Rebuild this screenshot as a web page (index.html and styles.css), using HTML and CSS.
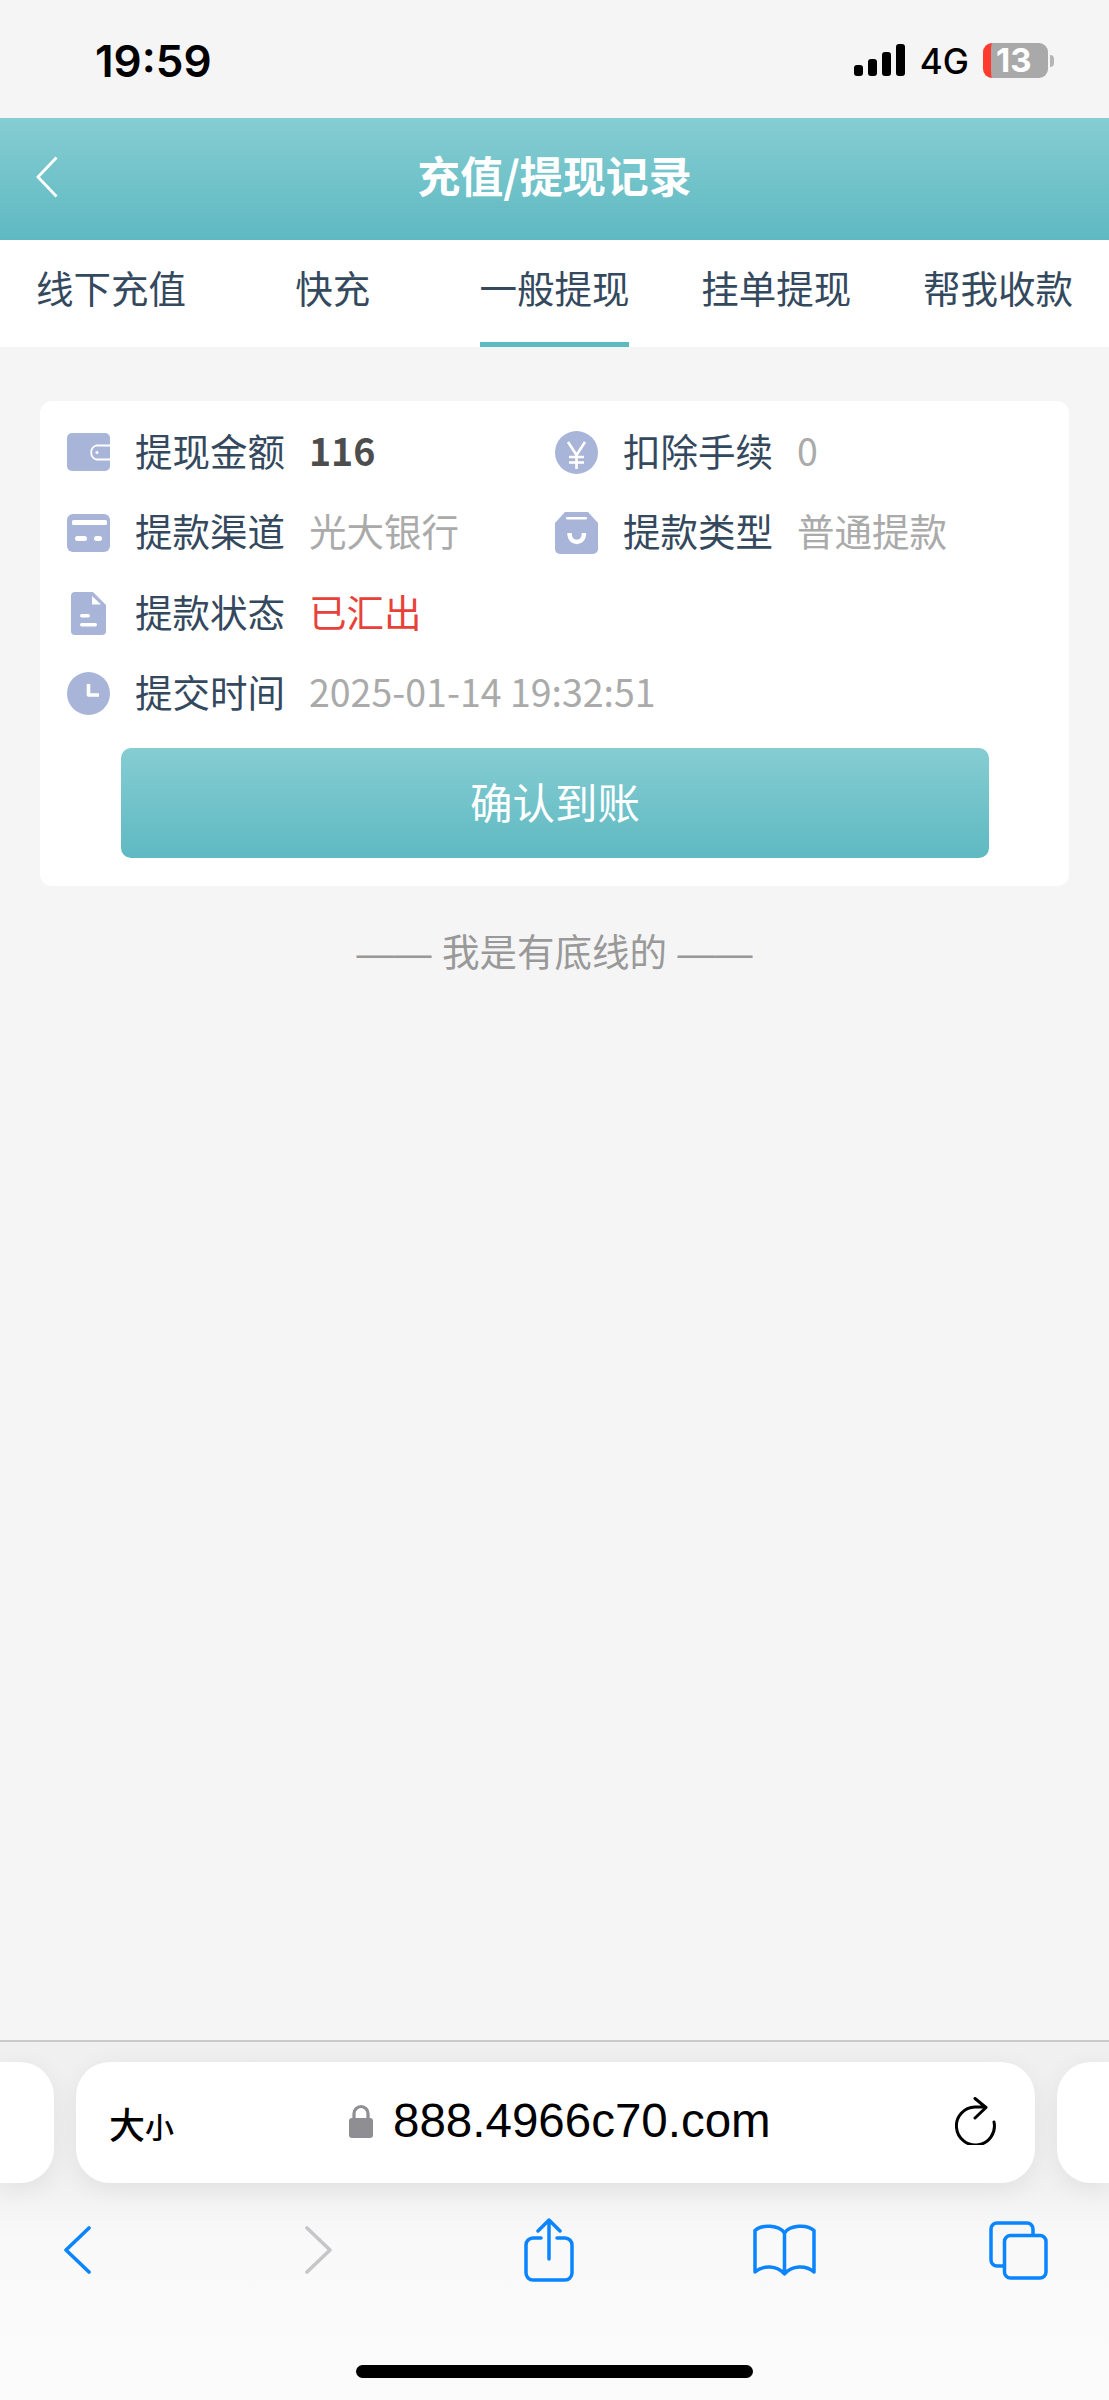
FILE: index.html
```html
<!DOCTYPE html>
<html lang="zh-CN">
<head>
    <meta charset="utf-8">
    <title>充值/提现记录</title>
    <link rel="stylesheet" href="styles.css">
</head>
<body>
    <div class="phone">
        <div class="statusbar">
            <span class="clock">19:59</span>
            <div class="status-right">
                <div class="signal"><i class="b1"></i><i class="b2"></i><i class="b3"></i><i class="b4"></i></div>
                <span class="net">4G</span>
                <div class="battery"><div class="battery-body"><span>13</span></div><i class="battery-nub"></i></div>
            </div>
        </div>

        <div class="header">
            <svg class="back" width="22" height="42" viewBox="0 0 22 42"><path d="M20.5 1.5 L2 21 L20.5 40.5" fill="none" stroke="#fff" stroke-width="2.8"/></svg>
            <h1>充值/提现记录</h1>
        </div>

        <div class="tabs">
            <a>线下充值</a>
            <a>快充</a>
            <a class="active">一般提现</a>
            <a>挂单提现</a>
            <a>帮我收款</a>
        </div>

        <div class="main">
            <div class="card">
                <div class="info">
                    <div class="item">
                        <span class="ico">
                            <svg width="43" height="38" viewBox="0 0 43 38">
                                <rect width="43" height="38" rx="5" fill="#a8b5d9"/>
                                <path d="M43 12.5 H29 a7.5 7.5 0 0 0 0 14 H43" fill="none" stroke="#fff" stroke-width="1.8"/>
                                <circle cx="30" cy="19.5" r="1.5" fill="#fff"/>
                            </svg>
                        </span>
                        <span class="label">提现金额</span>
                        <span class="value amount">116</span>
                    </div>
                    <div class="item">
                        <span class="ico">
                            <svg width="43" height="43" viewBox="0 0 43 43">
                                <circle cx="21.5" cy="21.5" r="21.5" fill="#a8b5d9"/>
                                <path d="M13 11 L21.5 24 L30 11 M21.5 24 V38 M14 26 H29 M14 31.5 H29" fill="none" stroke="#fff" stroke-width="2.6"/>
                            </svg>
                        </span>
                        <span class="label">扣除手续</span>
                        <span class="value">0</span>
                    </div>
                    <div class="item">
                        <span class="ico">
                            <svg width="43" height="38" viewBox="0 0 43 38">
                                <rect width="43" height="38" rx="6" fill="#a8b5d9"/>
                                <rect x="5" y="6" width="35" height="5" rx="1.5" fill="#fff"/>
                                <rect x="8" y="22" width="12" height="5" rx="2.5" fill="#fff"/>
                                <rect x="27" y="22" width="8" height="5" rx="2.5" fill="#fff"/>
                            </svg>
                        </span>
                        <span class="label">提款渠道</span>
                        <span class="value">光大银行</span>
                    </div>
                    <div class="item">
                        <span class="ico">
                            <svg width="43" height="42" viewBox="0 0 43 42">
                                <path d="M10 0 H33 L43 11 V37 a5 5 0 0 1 -5 5 H5 a5 5 0 0 1 -5 -5 V11 Z" fill="#a8b5d9"/>
                                <rect x="11" y="5" width="21" height="2.5" rx="1" fill="#fff"/>
                                <path d="M14.5 21 C14.5 33 29 33 29 21" fill="none" stroke="#fff" stroke-width="4.5"/>
                            </svg>
                        </span>
                        <span class="label">提款类型</span>
                        <span class="value">普通提款</span>
                    </div>
                    <div class="item wide">
                        <span class="ico">
                            <svg width="35" height="43" viewBox="0 0 35 43">
                                <path d="M4 0 H22 L35 13 V39 a4 4 0 0 1 -4 4 H4 a4 4 0 0 1 -4 -4 V4 a4 4 0 0 1 4 -4 Z" fill="#a8b5d9"/>
                                <path d="M21 4 L30 12.5 H21 Z" fill="#fff"/>
                                <rect x="9" y="22" width="10" height="3.5" rx="1.7" fill="#fff"/>
                                <rect x="9" y="31" width="17" height="3.5" rx="1.7" fill="#fff"/>
                            </svg>
                        </span>
                        <span class="label">提款状态</span>
                        <span class="value red">已汇出</span>
                    </div>
                    <div class="item wide">
                        <span class="ico">
                            <svg width="43" height="43" viewBox="0 0 43 43">
                                <circle cx="21.5" cy="21.5" r="21.5" fill="#a8b5d9"/>
                                <path d="M21.5 12 V23 H32" fill="none" stroke="#fff" stroke-width="3.6" stroke-linejoin="round"/>
                            </svg>
                        </span>
                        <span class="label">提交时间</span>
                        <span class="value">2025-01-14 19:32:51</span>
                    </div>
                </div>
                <button class="confirm">确认到账</button>
            </div>
            <div class="bottom-line">—— 我是有底线的 ——</div>
        </div>

        <div class="toolbar">
            <div class="pills">
                <div class="pill side-left"></div>
                <div class="pill url">
                    <span class="textsize"><b>大</b><small>小</small></span>
                    <span class="address">
                        <svg width="24" height="34" viewBox="0 0 24 34">
                            <path d="M5 16 V9.5 a7 7 0 0 1 14 0 V16" fill="none" stroke="#8e8e93" stroke-width="3.2"/>
                            <rect y="14" width="24" height="20" rx="3" fill="#8e8e93"/>
                        </svg>
                        <span>888.4966c70.com</span>
                    </span>
                    <svg class="reload" width="42" height="48" viewBox="0 0 42 48">
                        <path d="M39 25 A19 19 0 1 1 20 10 H30 M20 1.5 L31 10.5 L20 21" fill="none" stroke="#000" stroke-width="3" stroke-linecap="round" stroke-linejoin="round"/>
                    </svg>
                </div>
                <div class="pill side-right"></div>
            </div>

            <div class="nav-icons">
                <svg class="n-back" width="28" height="48" viewBox="0 0 28 48"><path d="M26 2 L3 24 L26 46" fill="none" stroke="#0a84ff" stroke-width="3.6" stroke-linecap="round" stroke-linejoin="round"/></svg>
                <svg class="n-forward" width="28" height="48" viewBox="0 0 28 48"><path d="M2 2 L25 24 L2 46" fill="none" stroke="#c6c6c8" stroke-width="3.6" stroke-linecap="round" stroke-linejoin="round"/></svg>
                <svg class="n-share" width="50" height="64" viewBox="0 0 50 64">
                    <path d="M17 20 H9 a7 7 0 0 0 -7 7 V55 a7 7 0 0 0 7 7 H41 a7 7 0 0 0 7 -7 V27 a7 7 0 0 0 -7 -7 H33 M25 41 V2.5 M14 13 L25 2 L36 13" fill="none" stroke="#0a84ff" stroke-width="3.5" stroke-linecap="round" stroke-linejoin="round"/>
                </svg>
                <svg class="n-book" width="63" height="52" viewBox="0 0 63 52">
                    <path d="M31.5 9 C26 1 9 0 2 6.5 V48 C10 41 24 41 31.5 50 C39 41 53 41 61 48 V6.5 C54 0 37 1 31.5 9 Z M31.5 9 V50" fill="none" stroke="#0a84ff" stroke-width="3.5" stroke-linejoin="round"/>
                </svg>
                <svg class="n-tabs" width="59" height="59" viewBox="0 0 59 59">
                    <path d="M14 45 H8 a6 6 0 0 1 -6 -6 V8 a6 6 0 0 1 6 -6 H38 a6 6 0 0 1 6 6 V14" fill="none" stroke="#0a84ff" stroke-width="3.5"/>
                    <rect x="15.5" y="14.5" width="41.5" height="42.5" rx="6" fill="none" stroke="#0a84ff" stroke-width="3.5"/>
                </svg>
            </div>

            <div class="home-indicator"></div>
        </div>
    </div>
</body>
</html>
```

FILE: styles.css
```css
* {
    box-sizing: border-box;
}
body {
    margin: 0;
    background-color: #f5f5f5;
    font-family: "Noto Sans CJK SC", "Noto Sans", sans-serif;
}
.phone {
    width: 1109px;
    height: 2400px;
    display: flex;
    flex-direction: column;
    overflow: hidden;
}

/* status bar */
.statusbar {
    height: 118px;
    flex: none;
    display: flex;
    justify-content: space-between;
    padding: 43px 55px 0 95px;
    color: #000;
    font-family: Inter, sans-serif;
}
.clock {
    font-size: 44px;
    font-weight: 600;
    line-height: 36px;
}
.status-right {
    display: flex;
    align-items: flex-start;
}
.signal {
    display: flex;
    align-items: flex-end;
    gap: 5px;
    height: 32px;
    margin-top: 1px;
}
.signal i {
    width: 9px;
    border-radius: 3px;
    background-color: #000;
}
.signal .b1 { height: 11px; }
.signal .b2 { height: 17px; }
.signal .b3 { height: 24px; }
.signal .b4 { height: 32px; }
.net {
    font-size: 35px;
    font-weight: 500;
    line-height: 36px;
    margin-left: 15px;
}
.battery {
    display: flex;
    align-items: center;
    margin-left: 14px;
    height: 35px;
}
.battery-body {
    width: 65px;
    height: 35px;
    border-radius: 9px;
    border-left: 8px solid #ff3b30;
    background-color: #a9a9a9;
    color: #fff;
    font-size: 33px;
    font-weight: 700;
    line-height: 35px;
    padding-left: 5px;
}
.battery-nub {
    width: 4px;
    height: 12px;
    margin-left: 2px;
    border-radius: 0 4px 4px 0;
    background-color: #b5b5b5;
}

/* header */
.header {
    height: 122px;
    flex: none;
    position: relative;
    display: flex;
    align-items: center;
    justify-content: center;
    background: linear-gradient(#85cdd2, #5fb9c2);
}
.header h1 {
    margin: 0 0 11px;
    color: #fff;
    font-size: 43px;
    font-weight: 700;
}
.back {
    position: absolute;
    left: 36px;
    top: 38px;
}

/* tabs */
.tabs {
    height: 107px;
    flex: none;
    display: grid;
    grid-template-columns: repeat(5, 1fr);
    background-color: #fff;
}
.tabs a {
    position: relative;
    display: flex;
    align-items: center;
    justify-content: center;
    padding-bottom: 14px;
    color: #34495e;
    font-size: 37.5px;
}
.tabs a.active::after {
    content: "";
    position: absolute;
    left: 36px;
    right: 36px;
    bottom: 0;
    height: 5px;
    background-color: #5dbac2;
}

/* record card */
.main {
    flex: 1;
    padding: 54px 40px 0;
}
.card {
    height: 485px;
    padding-top: 8px;
    border-radius: 12px;
    background-color: #fff;
}
.info {
    display: grid;
    grid-template-columns: 488px 1fr;
    grid-auto-rows: 80.5px;
    padding-left: 27px;
}
.item {
    display: flex;
    align-items: center;
    font-size: 37.5px;
}
.item .ico {
    position: relative;
    top: 3px;
}
.item.wide {
    grid-column: 1 / 3;
}
.ico {
    width: 43px;
    display: flex;
    justify-content: center;
}
.label {
    margin-left: 25px;
    color: #34495e;
}
.value {
    margin-left: 24px;
    color: #aaa;
}
.amount {
    color: #4d4d4d;
    font-weight: 700;
}
.red {
    color: #e8413a;
}
.confirm {
    display: block;
    width: 868px;
    height: 110px;
    margin: 17px 0 0 81px;
    padding: 0 0 6px;
    border: none;
    border-radius: 10px;
    background: linear-gradient(#85cdd2, #5fb9c2);
    color: #fff;
    font-family: inherit;
    font-size: 42.5px;
}
.bottom-line {
    margin-top: 36px;
    color: #999;
    font-family: "Liberation Sans", "Noto Sans CJK SC", sans-serif;
    font-size: 37.5px;
    text-align: center;
}

/* safari toolbar */
.toolbar {
    height: 360px;
    flex: none;
    border-top: 2px solid #cbcbcb;
    background: linear-gradient(#f0f0f0 0%, #f1f1f1 40%, #f9f9f9 55%, #fbfbfb 100%);
}
.pills {
    display: grid;
    grid-template-columns: 54px 959px 1fr;
    gap: 22px;
    height: 121px;
    margin-top: 20px;
}
.pill {
    background-color: #fff;
    box-shadow: 0 6px 26px rgba(0, 0, 0, 0.07);
}
.side-left {
    border-radius: 0 34px 34px 0;
}
.side-right {
    border-radius: 34px 0 0 34px;
}
.url {
    position: relative;
    display: flex;
    align-items: center;
    border-radius: 34px;
    padding-left: 33px;
}
.textsize {
    display: flex;
    align-items: flex-end;
    color: #000;
    line-height: 1;
}
.textsize b {
    font-size: 36px;
    font-weight: 500;
}
.textsize small {
    font-size: 29px;
    font-weight: 500;
}
.address {
    display: flex;
    align-items: center;
    gap: 20px;
    margin-left: 175px;
    color: #000;
    font-family: "Liberation Sans", sans-serif;
    font-size: 47.5px;
    margin-top: -4px;
}
.reload {
    position: absolute;
    right: 38px;
    top: 35px;
}
.nav-icons {
    display: flex;
    align-items: center;
    height: 64px;
    margin-top: 35px;
    padding-left: 63px;
}
.n-forward { margin-left: 214px; }
.n-share { margin-left: 191px; }
.n-book { margin-left: 179px; }
.n-tabs { margin-left: 173px; }
.home-indicator {
    width: 397px;
    height: 13px;
    margin: 83px auto 0;
    border-radius: 7px;
    background-color: #000;
}
```
